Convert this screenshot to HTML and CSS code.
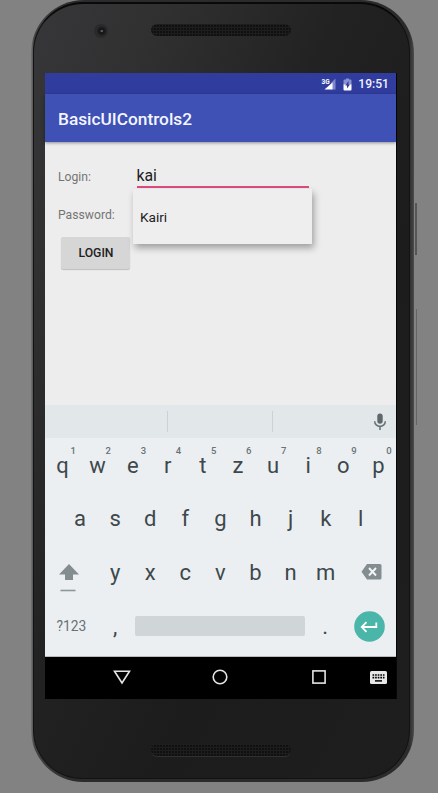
FILE: index.html
```html
<!DOCTYPE html>
<html lang="en">
<head>
<meta charset="utf-8">
<title>BasicUIControls2</title>
<link rel="stylesheet" href="styles.css">
</head>
<body>
<div class="phone">
  <span class="side power"></span><span class="side volume"></span>
  <div class="body">
    <div class="top"><span class="camera"></span><span class="grille"></span></div>
    <main class="screen">
      <div class="status">
        <svg class="signal" width="16" height="14" viewBox="0 0 16 14"><path d="M14.500 1.500v11h-4V5.500z" fill="#7f88c9"/><path d="M11.500 5.500v7H3.500z" fill="#fff"/><text x="0.500" y="6.500">3G</text></svg>
        <svg class="battery" width="9" height="13" viewBox="0 0 9 13"><path d="M3 0.500h3v1h1.500q1 0 1 1v4.500H0.500V2.500q0-1 1-1H3z" fill="#8a92cf"/><path d="M0.500 6.500h8v5q0 1-1 1h-6q-1 0-1-1z" fill="#fff"/><path d="M5.500 3v3.500h1.500L4 10.500V7.500H2.300z" fill="#303c9e"/></svg>
        <span class="clock">19:51</span>
      </div>
      <header class="appbar">BasicUIControls2</header>
      <section class="content">
        <div class="field login"><label>Login:</label><div class="input"><span class="typed">kai</span><div class="dropdown">Kairi</div></div></div>
        <div class="field password"><label>Password:</label></div>
        <button class="submit">LOGIN</button>
      </section>
      <div class="suggest"><span></span><span></span><span>
        <svg width="14" height="18" viewBox="0 0 14 18"><rect x="4.3" y="0.5" width="5.4" height="10.3" rx="2.7" fill="#5f686c"/><path d="M1.7 8.3a5.3 5.1 0 0 0 10.6 0M7 13.4V17" fill="none" stroke="#6a7377" stroke-width="1.6"/></svg></span></div>
      <div class="keys">
        <div class="row"><b>q<sup>1</sup></b><b>w<sup>2</sup></b><b>e<sup>3</sup></b><b>r<sup>4</sup></b><b>t<sup>5</sup></b><b>z<sup>6</sup></b><b>u<sup>7</sup></b><b>i<sup>8</sup></b><b>o<sup>9</sup></b><b>p<sup>0</sup></b></div>
        <div class="row middle"><b>a</b><b>s</b><b>d</b><b>f</b><b>g</b><b>h</b><b>j</b><b>k</b><b>l</b></div>
        <div class="row">
          <span class="wide shift"><svg width="20" height="29" viewBox="0 0 20 29"><path d="M10 0l10 10.500h-6V16H6v-5.500H0z" fill="#838d90"/><path d="M1.500 26.500h15" stroke="#8d979a" stroke-width="1.600"/></svg></span>
          <b>y</b><b>x</b><b>c</b><b>v</b><b>b</b><b>n</b><b>m</b>
          <span class="wide erase"><svg width="21" height="16" viewBox="0 0 21 16"><path d="M6 0h13q1.500 0 1.500 1.500v12.500q0 1.500-1.500 1.500H6L0.500 7.800z" fill="#838d90"/><path d="M8 4l7 7.500M15 4L8 11.500" stroke="#f2f5f6" stroke-width="1.900"/></svg></span>
        </div>
        <div class="row">
          <span class="wide sym">?123</span><b class="comma">,</b><span class="space"></span><b class="period">.</b>
          <span class="wide enter"><svg width="31" height="31" viewBox="0 0 31 31"><circle cx="15.500" cy="15.500" r="15.300" fill="#4ab5a9"/><path d="M22.300 11.500v4.500H8M12.500 11.200L7.700 16l4.800 4.800" fill="none" stroke="#fff" stroke-width="1.800"/></svg></span>
        </div>
      </div>
      <nav class="nav">
        <svg width="18" height="15" viewBox="0 0 18 15"><path d="M1.500 1.300h15L9 13z" fill="none" stroke="#e4e4e4" stroke-width="1.600"/></svg>
        <svg width="16" height="16" viewBox="0 0 16 16"><circle cx="8" cy="8" r="6.800" fill="none" stroke="#e4e4e4" stroke-width="1.600"/></svg>
        <svg width="14" height="14" viewBox="0 0 14 14"><rect x="0.900" y="0.900" width="12.200" height="12.200" fill="none" stroke="#e4e4e4" stroke-width="1.600"/></svg>
        <svg width="17" height="13" viewBox="0 0 17 13"><rect width="17" height="13" rx="1.500" fill="#e8e8e8"/><path d="M2.500 4h12M2.500 6.600h12" stroke="#000" stroke-width="1.600" stroke-dasharray="1.700 .9"/><path d="M5 9.900h7" stroke="#000" stroke-width="1.500"/></svg>
      </nav>
    </main>
    <div class="bottom"><span class="grille"></span></div>
  </div>
</div>
</body>
</html>
```
FILE: styles.css
```css
* { box-sizing: border-box; }
body { margin: 0; height: 793px; overflow: hidden; background: #828282; font-family: Roboto, "Liberation Sans", sans-serif; }
svg { display: block; flex: none; }
.phone { position: relative; width: 383px; height: 782px; margin-left: 31px; padding: 2px 4px 3px 2px; border-radius: 53px 53px 52px 52px; background: linear-gradient(90deg, #757575 0, #444 3px, #2b2b2c 40px, #2b2b2c 378px, #3c3c3c 381px, #4c4c4c 383px); }
.body { height: 777px; padding: 0 10px 0 11px; border: 1px solid #131313; border-top: 2px solid #090909; border-radius: 50px 50px 49px 49px; background: linear-gradient(115deg, #373739 0, #303031 18%, #222223 42%, #1c1c1d 65%, #1e1e1f 100%); }
.side { position: absolute; left: 384px; background: #555; }
.power { top: 203px; width: 2px; height: 52px; }
.volume { top: 309px; left: 385px; width: 1px; height: 116px; background: #646464; }
.top { height: 69px; display: flex; align-items: flex-start; padding: 20px 0 0 49px; }
.camera { width: 14px; height: 14px; border-radius: 50%; background: radial-gradient(circle at 55% 50%, #556 0 1px, #171717 1.500px 3px, #29292a 5px 7px); }
.grille { width: 140px; height: 12px; border-radius: 6px; background: repeating-linear-gradient(90deg, #0000 0 2px, #1c1c1c 2px 3px), repeating-linear-gradient(0deg, #101010 0 2px, #1e1e1e 2px 3px); }
.top .grille { margin-left: 43px; }
.bottom { display: flex; padding: 45px 0 0 106px; }
.bottom .grille { height: 13px; border-bottom: 1px solid #303031; }
.screen { display: flex; flex-direction: column; width: 352px; height: 626px; background: #ededed; border-right: 1px solid #060606; }
.status { height: 21px; padding: 1px 7px 0 0; display: flex; align-items: center; justify-content: flex-end; background: #303c9e; color: #f0f2ff; }
.signal text { font: 700 6.500px Roboto, sans-serif; fill: #fff; }
.battery { margin: 0 6px 0 6px; }
.clock { font-size: 12.100px; font-weight: 500; line-height: 21px; }
.appbar { height: 48px; padding-left: 13px; background: #3f51b5; color: #f3f6ff; font-size: 17.300px; font-weight: 500; line-height: 50px; box-shadow: 0 1px 3px #0006; }
.content { height: 263px; padding: 21px 13px 0; color: #212121; }
.field { display: flex; height: 38px; font-size: 12.200px; }
.field label { width: 75px; padding-top: 6px; line-height: 16px; color: #757575; }
.input { position: relative; width: 176px; height: 25px; padding: 0 0 0 3.500px; font-size: 15.800px; line-height: 25px; }
.typed { display: block; height: 25px; border-bottom: 2px solid #dc4b80; }
.dropdown { position: absolute; top: 26px; left: 0; width: 179px; height: 55px; padding-left: 7px; background: #eee; box-shadow: 2px 4px 7px #0005; font-size: 13.600px; line-height: 56px; }
.submit { display: block; width: 69px; height: 32px; margin: -2px 0 0 3px; padding: 0 0 0 1px; border: 0; border-radius: 2px; background: #d6d6d6; box-shadow: 0 1px 1px #0003; font: 500 12.200px Roboto, sans-serif; color: #212121; }
.suggest { height: 33px; display: grid; grid-template-columns: 123px 104.500px 1fr; align-items: center; background: #e2e7ea; }
.suggest span { height: 21px; border-right: 1px solid #cbd1d4; }
.suggest span:last-child { height: auto; border: 0; display: flex; justify-content: flex-end; padding-right: 9px; }
.keys { height: 219px; background: #ebeff2; border-bottom: 1px solid #b9bcbe; color: #3e484c; }
.row { height: 53.600px; display: flex; align-items: center; }
.row b { position: relative; width: 35.100px; text-align: center; font-weight: 400; font-size: 22px; line-height: 54px; padding-top: 2px; }
.row sup { position: absolute; left: 25.500px; top: 7px; font-size: 9.500px; font-weight: 500; line-height: 13px; color: #697275; }
.middle { padding-left: 17.500px; }
.wide { width: 52.600px; display: flex; justify-content: center; align-items: center; }
.shift { padding: 13px 5px 0 0; }
.erase { padding: 1px 0 0 3px; }
.sym { font-size: 13.800px; color: #687174; padding-top: 1px; }
.enter { padding-top: 1px; }
.space { width: 170px; height: 20px; margin: 0 2.500px; border-radius: 2px; background: #d0d5d8; }
.nav { height: 42px; background: #000; display: grid; grid-template-columns: 27px 99px 98.500px 98.500px 1fr; align-items: center; justify-items: center; }
.nav svg { margin-top: -2px; }
.nav svg:first-child { grid-column: 2; }
.nav svg:last-child { justify-self: end; margin-right: 9px; }
```
